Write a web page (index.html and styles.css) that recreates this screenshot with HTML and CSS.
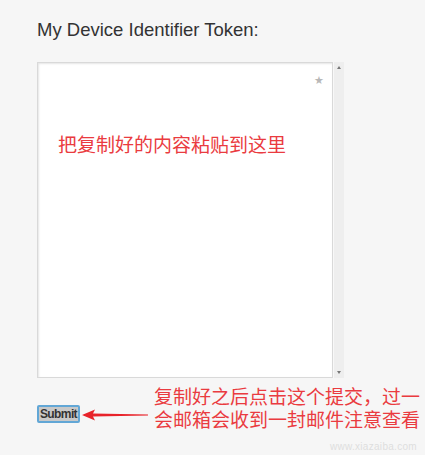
FILE: index.html
```html
<!DOCTYPE html>
<html>
<head>
<meta charset="utf-8">
<link rel="stylesheet" href="styles.css">
</head>
<body>
<div class="page">
  <h1 class="title">My Device Identifier Token:</h1>
  <div class="field">
    <div class="box">
      <span class="star">★</span>
      <p class="hint">把复制好的内容粘贴到这里</p>
    </div>
    <div class="scroll">
      <span class="arr up"></span>
      <span class="arr down"></span>
    </div>
  </div>
  <div class="actions">
    <button class="submit">Submit</button>
    <svg class="arrow" width="66" height="12" viewBox="0 0 66 12">
      <polygon points="0,6 13,0.5 11,4.6 66,5.6 66,6.4 11,7.4 13,11.5" fill="#e8232a"/>
    </svg>
    <p class="note">复制好之后点击这个提交，过一<br>会邮箱会收到一封邮件注意查看</p>
  </div>
  <div class="watermark">www.xiazaiba.com</div>
</div>
</body>
</html>
```
FILE: styles.css
```css
html, body {
  margin: 0;
  padding: 0;
  background: #f6f6f6;
}
.page {
  position: relative;
  width: 425px;
  height: 455px;
  overflow: hidden;
  padding: 20px 0 0 37px;
  box-sizing: border-box;
  font-family: "Liberation Sans", Arial, sans-serif;
}
.title {
  margin: 0;
  font-size: 18.5px;
  font-weight: normal;
  line-height: 20px;
  color: #333;
}
.field {
  display: flex;
  margin-top: 22px;
  height: 316px;
}
.box {
  position: relative;
  width: 296px;
  height: 316px;
  box-sizing: border-box;
  background: #fff;
  border: 1px solid #d9d9d9;
  box-shadow: inset 1px 1px 2px #e6e6e6;
}
.star {
  position: absolute;
  top: 11px;
  right: 8px;
  font-size: 11px;
  color: #b8b8b8;
  line-height: 12px;
}
.hint {
  margin: 69px 0 0 20px;
  font-family: "Noto Sans CJK SC", sans-serif;
  font-size: 19px;
  line-height: 24px;
  color: #ea3b40;
}
.scroll {
  position: relative;
  width: 10px;
  background: #eeeeee;
  border-left: 1px solid #f8f8f8;
}
.arr {
  position: absolute;
  left: 3px;
  width: 0;
  height: 0;
  border-left: 2px solid transparent;
  border-right: 2px solid transparent;
}
.arr.up {
  top: 4px;
  border-bottom: 3px solid #777;
}
.arr.down {
  bottom: 4px;
  border-top: 3px solid #777;
}
.actions {
  display: flex;
  align-items: flex-start;
  margin-top: 6px;
}
.submit {
  margin-top: 21px;
  width: 43px;
  height: 18px;
  padding: 0;
  box-sizing: border-box;
  background: #c9c9c9;
  border: 2px solid #62a7d6;
  border-radius: 2px;
  font-family: "Liberation Sans", Arial, sans-serif;
  font-size: 12px;
  font-weight: bold;
  letter-spacing: -0.6px;
  line-height: 13px;
  color: #333;
}
.arrow {
  margin: 25px 0 0 2px;
  display: block;
}
.note {
  margin: 0 0 0 6px;
  font-family: "Noto Sans CJK SC", sans-serif;
  font-size: 19px;
  line-height: 23px;
  color: #ea3b40;
  white-space: nowrap;
}
.watermark {
  position: absolute;
  right: 8px;
  bottom: 3px;
  font-size: 10px;
  line-height: 11px;
  color: #dedede;
  letter-spacing: 0.3px;
}
```
